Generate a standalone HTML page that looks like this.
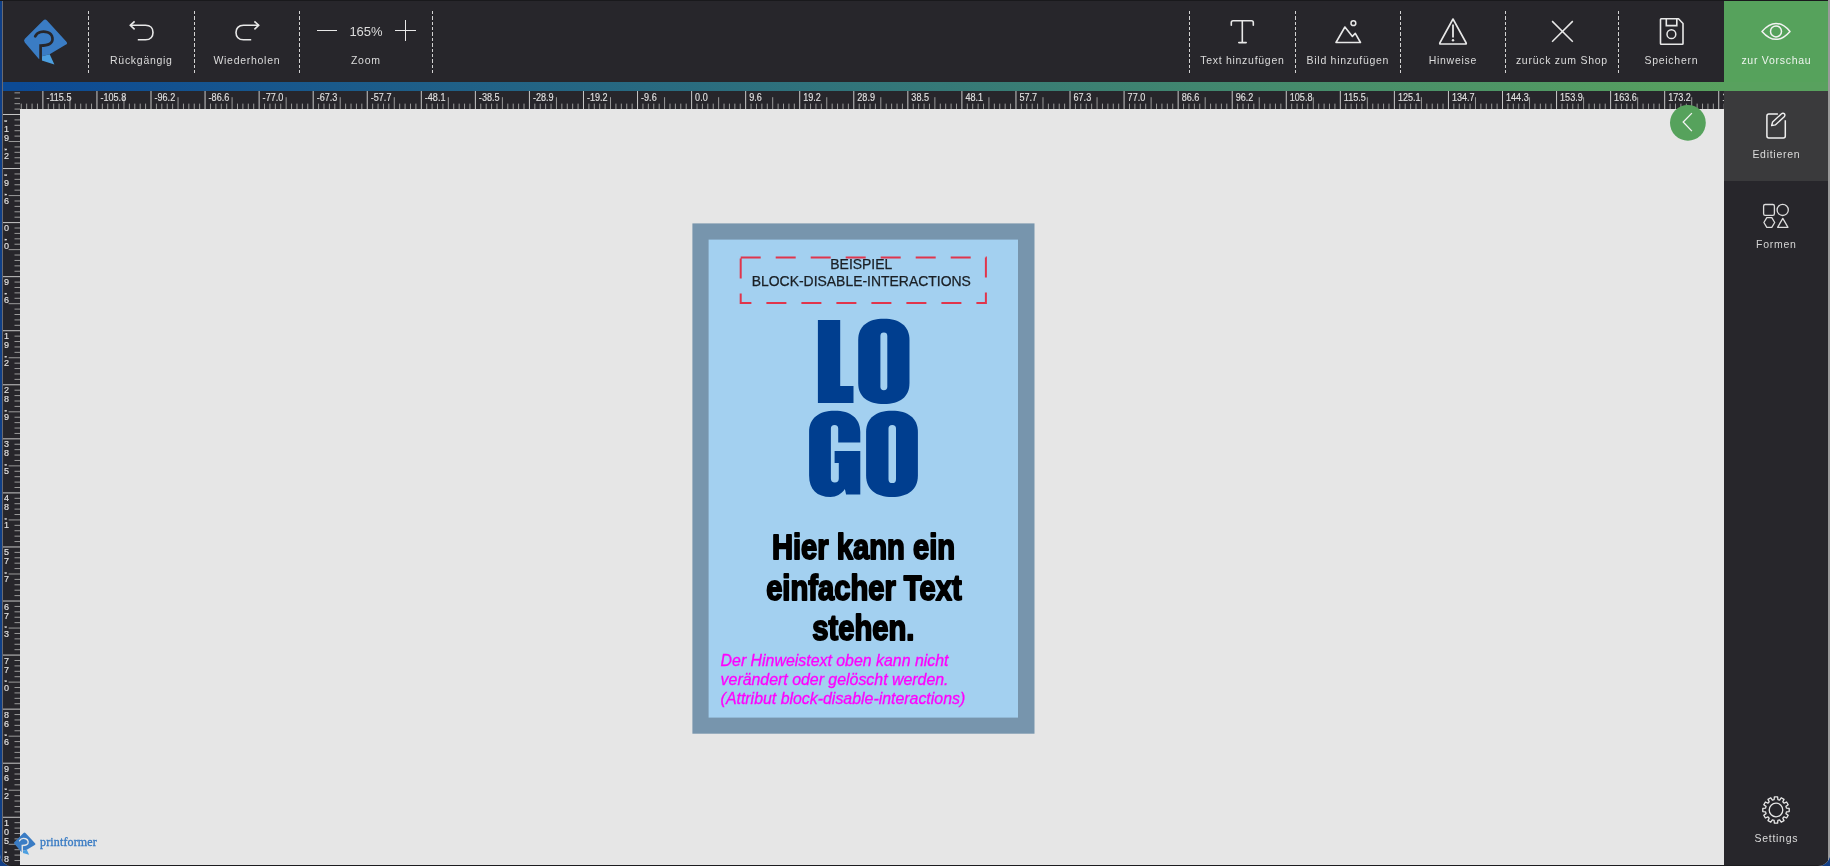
<!DOCTYPE html>
<html><head><meta charset="utf-8">
<style>
html,body{margin:0;padding:0;}
body{width:1830px;height:866px;position:relative;overflow:hidden;background:#123f86;font-family:"Liberation Sans",sans-serif;}
.app{will-change:transform;position:absolute;left:0;top:0;width:1830px;height:866px;overflow:hidden;border-radius:0 0 12px 12px;background:#e6e6e6;}
.tb{position:absolute;left:0;top:0;width:1830px;height:82px;background:#27262b;}
.sep{position:absolute;top:10.5px;width:1px;height:62.5px;background:repeating-linear-gradient(to bottom,#d2d2d2 0,#d2d2d2 3.4px,transparent 3.4px,transparent 5.36px);}
.lbl{position:absolute;top:51.6px;height:16px;font-size:10.5px;letter-spacing:0.72px;text-indent:0.72px;color:#dcdcdc;white-space:nowrap;text-align:center;line-height:16px;}
.ico{position:absolute;overflow:visible;}
.bar{position:absolute;left:0;top:82px;width:1830px;height:9px;background:linear-gradient(to right,#0c4a95 20px,#58a15e 1724px);}
.hr{position:absolute;left:2px;top:91px;width:1722px;height:18px;background:#27262b;}
.vr{position:absolute;left:2px;top:91px;width:18px;height:775px;background:#27262b;}
.side{position:absolute;left:1724px;top:91px;width:104px;height:775px;background:#27262b;}
.sideact{position:absolute;left:1724px;top:91px;width:104px;height:90px;background:#3a3a3c;}
.slbl{position:absolute;font-size:10.5px;letter-spacing:0.72px;text-indent:0.72px;color:#dcdcdc;white-space:nowrap;text-align:center;width:104px;left:1724px;line-height:14px;}
.green{position:absolute;left:1724px;top:1px;width:104px;height:90px;background:#56a25c;}
</style></head><body>
<div class="app">
  <div class="tb"></div>
  <div class="green"></div>
  <div class="bar"></div>

  <!-- logo -->
  <svg class="ico" style="left:0;top:0" width="80" height="80" viewBox="0 0 80 80">
    <path d="M43.2,20.6 Q45.1,18.6 47,20.6 L66.2,41.4 Q68.2,43.6 65.6,44.8 L49.7,54.3 L41.8,56.2 L41.8,59.5 L38.9,58.9 L24.8,42.4 Q23.2,40.5 24.9,38.8 Z" fill="#3a7cc4"/>
    <path d="M41.8,56.2 L49.7,54.3 L54.4,64.4 L41.8,60.5 Z" fill="#4c9fe0"/>
    <path d="M35.2,36.3 C37.5,31.6 43,30.8 47.5,32.2 C53.5,34.3 54,41.5 49.5,44 C47,45.5 44,45.6 40.6,45.6 L40.6,60" fill="none" stroke="#27262b" stroke-width="2.7" stroke-linecap="round"/>
  </svg>

  <div class="sep" style="left:88px"></div>
  <div class="sep" style="left:194px"></div>
  <div class="sep" style="left:299px"></div>
  <div class="sep" style="left:432px"></div>

  <div class="sep" style="left:1189px"></div>
  <div class="sep" style="left:1295px"></div>
  <div class="sep" style="left:1400px"></div>
  <div class="sep" style="left:1505px"></div>
  <div class="sep" style="left:1618px"></div>

  <!-- undo -->
  <svg class="ico" style="left:120px;top:10px" width="40" height="40" viewBox="0 0 40 40">
    <path d="M10.5,15.3 L25.5,15.3 C30.5,15.3 33,18.6 33,22.4 C33,26.4 30.5,29.8 25.5,29.8 L17.8,29.8" fill="none" stroke="#e8e8e8" stroke-width="1.6"/>
    <path d="M14.6,11.3 L10.3,15.3 L14.6,19.3" fill="none" stroke="#e8e8e8" stroke-width="1.6"/>
  </svg>
  <div class="lbl" style="left:88px;width:106px">Rückgängig</div>

  <!-- redo -->
  <svg class="ico" style="left:226px;top:10px" width="40" height="40" viewBox="0 0 40 40">
    <path d="M32.5,15.3 L17.5,15.3 C12.5,15.3 10,18.6 10,22.4 C10,26.4 12.5,29.8 17.5,29.8 L25.2,29.8" fill="none" stroke="#e8e8e8" stroke-width="1.6"/>
    <path d="M28.4,11.3 L32.7,15.3 L28.4,19.3" fill="none" stroke="#e8e8e8" stroke-width="1.6"/>
  </svg>
  <div class="lbl" style="left:194px;width:105px">Wiederholen</div>

  <!-- zoom -->
  <div style="position:absolute;left:317px;top:29.5px;width:20px;height:1.6px;background:#e8e8e8"></div>
  <div style="position:absolute;left:395px;top:29.7px;width:21px;height:1.6px;background:#e8e8e8"></div>
  <div style="position:absolute;left:404.7px;top:20px;width:1.6px;height:21px;background:#e8e8e8"></div>
  <div style="position:absolute;left:340px;top:22.7px;width:52px;text-align:center;font-size:13px;line-height:18px;color:#dcdcdc">165%</div>
  <div class="lbl" style="left:299px;width:133px">Zoom</div>

  <!-- text add -->
  <svg class="ico" style="left:1222px;top:10px" width="40" height="40" viewBox="0 0 40 40">
    <path d="M9.3,15.2 L9.3,12.6 Q9.3,10.8 11.1,10.8 L29.5,10.8 Q31.3,10.8 31.3,12.6 L31.3,15.2 M20.3,10.8 L20.3,32.6 M16.8,32.6 L24.2,32.6" fill="none" stroke="#e8e8e8" stroke-width="1.6" stroke-linecap="round"/>
  </svg>
  <div class="lbl" style="left:1189px;width:106px">Text hinzufügen</div>

  <!-- image add -->
  <svg class="ico" style="left:1328px;top:10px" width="40" height="40" viewBox="0 0 40 40">
    <path d="M8,32.5 L16.9,17 L24.4,26.4 L27.3,23.3 L32.5,32.5 Z" fill="none" stroke="#e8e8e8" stroke-width="1.6" stroke-linejoin="round"/>
    <circle cx="25.4" cy="13.2" r="2.4" fill="none" stroke="#e8e8e8" stroke-width="1.5"/>
  </svg>
  <div class="lbl" style="left:1295px;width:105px">Bild hinzufügen</div>

  <!-- warning -->
  <svg class="ico" style="left:1433px;top:10px" width="40" height="40" viewBox="0 0 40 40">
    <path d="M20,9 L33.2,33 Q33.6,34 32.6,34 L7.4,34 Q6.4,34 6.8,33 Z" fill="none" stroke="#e8e8e8" stroke-width="1.6" stroke-linejoin="round"/>
    <path d="M20,14.5 L20,27.5" stroke="#e8e8e8" stroke-width="1.8"/>
    <circle cx="20" cy="30.2" r="1.2" fill="#e8e8e8"/>
  </svg>
  <div class="lbl" style="left:1400px;width:105px">Hinweise</div>

  <!-- close -->
  <svg class="ico" style="left:1542px;top:11px" width="40" height="40" viewBox="0 0 40 40">
    <path d="M10.1,10.1 L30.8,30.8 M30.8,10.1 L10.1,30.8" fill="none" stroke="#e8e8e8" stroke-width="1.5"/>
  </svg>
  <div class="lbl" style="left:1505px;width:113px">zurück zum Shop</div>

  <!-- save -->
  <svg class="ico" style="left:1651px;top:10px" width="40" height="40" viewBox="0 0 40 40">
    <path d="M10.5,8.8 L27.5,8.8 L32,13.5 L32,33.5 Q32,34.2 31.3,34.2 L10.2,34.2 Q9.5,34.2 9.5,33.5 L9.5,9.5 Q9.5,8.8 10.2,8.8 Z" fill="none" stroke="#e8e8e8" stroke-width="1.6" stroke-linejoin="round"/>
    <path d="M15.3,9 L15.3,15.6 L25.8,15.6 L25.8,9" fill="none" stroke="#e8e8e8" stroke-width="1.6"/>
    <circle cx="20.4" cy="24.2" r="4.4" fill="none" stroke="#e8e8e8" stroke-width="1.5"/>
  </svg>
  <div class="lbl" style="left:1618px;width:106px">Speichern</div>

  <!-- preview -->
  <svg class="ico" style="left:1756px;top:12px" width="40" height="40" viewBox="0 0 40 40">
    <path d="M6,19.4 Q20,3.5 34,19.4 Q20,35.3 6,19.4 Z" fill="none" stroke="#f2f2f2" stroke-width="1.5" stroke-linejoin="round"/>
    <circle cx="20" cy="19.4" r="5.5" fill="none" stroke="#f2f2f2" stroke-width="1.5"/>
  </svg>
  <div class="lbl" style="left:1724px;width:104px;color:#eef5ee">zur Vorschau</div>

  <!-- rulers -->
  <div class="hr"></div>
  <div class="vr"></div>
  <svg style="position:absolute;left:20px;top:91px" width="1704" height="18" viewBox="0 0 1704 18"><rect x="0.76" y="12.6" width="1" height="5.4" fill="#9a9a9a"/><rect x="6.16" y="12.6" width="1" height="5.4" fill="#9a9a9a"/><rect x="11.57" y="12.6" width="1" height="5.4" fill="#9a9a9a"/><rect x="16.97" y="12.6" width="1" height="5.4" fill="#9a9a9a"/><rect x="22.38" y="0" width="1" height="18" fill="#c8c8c8"/><rect x="27.79" y="12.6" width="1" height="5.4" fill="#9a9a9a"/><rect x="33.19" y="12.6" width="1" height="5.4" fill="#9a9a9a"/><rect x="38.60" y="12.6" width="1" height="5.4" fill="#9a9a9a"/><rect x="44.00" y="12.6" width="1" height="5.4" fill="#9a9a9a"/><rect x="49.41" y="6.2" width="1" height="11.8" fill="#9a9a9a"/><rect x="54.82" y="12.6" width="1" height="5.4" fill="#9a9a9a"/><rect x="60.22" y="12.6" width="1" height="5.4" fill="#9a9a9a"/><rect x="65.63" y="12.6" width="1" height="5.4" fill="#9a9a9a"/><rect x="71.03" y="12.6" width="1" height="5.4" fill="#9a9a9a"/><rect x="76.44" y="0" width="1" height="18" fill="#c8c8c8"/><rect x="81.85" y="12.6" width="1" height="5.4" fill="#9a9a9a"/><rect x="87.25" y="12.6" width="1" height="5.4" fill="#9a9a9a"/><rect x="92.66" y="12.6" width="1" height="5.4" fill="#9a9a9a"/><rect x="98.06" y="12.6" width="1" height="5.4" fill="#9a9a9a"/><rect x="103.47" y="6.2" width="1" height="11.8" fill="#9a9a9a"/><rect x="108.88" y="12.6" width="1" height="5.4" fill="#9a9a9a"/><rect x="114.28" y="12.6" width="1" height="5.4" fill="#9a9a9a"/><rect x="119.69" y="12.6" width="1" height="5.4" fill="#9a9a9a"/><rect x="125.09" y="12.6" width="1" height="5.4" fill="#9a9a9a"/><rect x="130.50" y="0" width="1" height="18" fill="#c8c8c8"/><rect x="135.91" y="12.6" width="1" height="5.4" fill="#9a9a9a"/><rect x="141.31" y="12.6" width="1" height="5.4" fill="#9a9a9a"/><rect x="146.72" y="12.6" width="1" height="5.4" fill="#9a9a9a"/><rect x="152.12" y="12.6" width="1" height="5.4" fill="#9a9a9a"/><rect x="157.53" y="6.2" width="1" height="11.8" fill="#9a9a9a"/><rect x="162.94" y="12.6" width="1" height="5.4" fill="#9a9a9a"/><rect x="168.34" y="12.6" width="1" height="5.4" fill="#9a9a9a"/><rect x="173.75" y="12.6" width="1" height="5.4" fill="#9a9a9a"/><rect x="179.15" y="12.6" width="1" height="5.4" fill="#9a9a9a"/><rect x="184.56" y="0" width="1" height="18" fill="#c8c8c8"/><rect x="189.97" y="12.6" width="1" height="5.4" fill="#9a9a9a"/><rect x="195.37" y="12.6" width="1" height="5.4" fill="#9a9a9a"/><rect x="200.78" y="12.6" width="1" height="5.4" fill="#9a9a9a"/><rect x="206.18" y="12.6" width="1" height="5.4" fill="#9a9a9a"/><rect x="211.59" y="6.2" width="1" height="11.8" fill="#9a9a9a"/><rect x="217.00" y="12.6" width="1" height="5.4" fill="#9a9a9a"/><rect x="222.40" y="12.6" width="1" height="5.4" fill="#9a9a9a"/><rect x="227.81" y="12.6" width="1" height="5.4" fill="#9a9a9a"/><rect x="233.21" y="12.6" width="1" height="5.4" fill="#9a9a9a"/><rect x="238.62" y="0" width="1" height="18" fill="#c8c8c8"/><rect x="244.03" y="12.6" width="1" height="5.4" fill="#9a9a9a"/><rect x="249.43" y="12.6" width="1" height="5.4" fill="#9a9a9a"/><rect x="254.84" y="12.6" width="1" height="5.4" fill="#9a9a9a"/><rect x="260.24" y="12.6" width="1" height="5.4" fill="#9a9a9a"/><rect x="265.65" y="6.2" width="1" height="11.8" fill="#9a9a9a"/><rect x="271.06" y="12.6" width="1" height="5.4" fill="#9a9a9a"/><rect x="276.46" y="12.6" width="1" height="5.4" fill="#9a9a9a"/><rect x="281.87" y="12.6" width="1" height="5.4" fill="#9a9a9a"/><rect x="287.27" y="12.6" width="1" height="5.4" fill="#9a9a9a"/><rect x="292.68" y="0" width="1" height="18" fill="#c8c8c8"/><rect x="298.09" y="12.6" width="1" height="5.4" fill="#9a9a9a"/><rect x="303.49" y="12.6" width="1" height="5.4" fill="#9a9a9a"/><rect x="308.90" y="12.6" width="1" height="5.4" fill="#9a9a9a"/><rect x="314.30" y="12.6" width="1" height="5.4" fill="#9a9a9a"/><rect x="319.71" y="6.2" width="1" height="11.8" fill="#9a9a9a"/><rect x="325.12" y="12.6" width="1" height="5.4" fill="#9a9a9a"/><rect x="330.52" y="12.6" width="1" height="5.4" fill="#9a9a9a"/><rect x="335.93" y="12.6" width="1" height="5.4" fill="#9a9a9a"/><rect x="341.33" y="12.6" width="1" height="5.4" fill="#9a9a9a"/><rect x="346.74" y="0" width="1" height="18" fill="#c8c8c8"/><rect x="352.15" y="12.6" width="1" height="5.4" fill="#9a9a9a"/><rect x="357.55" y="12.6" width="1" height="5.4" fill="#9a9a9a"/><rect x="362.96" y="12.6" width="1" height="5.4" fill="#9a9a9a"/><rect x="368.36" y="12.6" width="1" height="5.4" fill="#9a9a9a"/><rect x="373.77" y="6.2" width="1" height="11.8" fill="#9a9a9a"/><rect x="379.18" y="12.6" width="1" height="5.4" fill="#9a9a9a"/><rect x="384.58" y="12.6" width="1" height="5.4" fill="#9a9a9a"/><rect x="389.99" y="12.6" width="1" height="5.4" fill="#9a9a9a"/><rect x="395.39" y="12.6" width="1" height="5.4" fill="#9a9a9a"/><rect x="400.80" y="0" width="1" height="18" fill="#c8c8c8"/><rect x="406.21" y="12.6" width="1" height="5.4" fill="#9a9a9a"/><rect x="411.61" y="12.6" width="1" height="5.4" fill="#9a9a9a"/><rect x="417.02" y="12.6" width="1" height="5.4" fill="#9a9a9a"/><rect x="422.42" y="12.6" width="1" height="5.4" fill="#9a9a9a"/><rect x="427.83" y="6.2" width="1" height="11.8" fill="#9a9a9a"/><rect x="433.24" y="12.6" width="1" height="5.4" fill="#9a9a9a"/><rect x="438.64" y="12.6" width="1" height="5.4" fill="#9a9a9a"/><rect x="444.05" y="12.6" width="1" height="5.4" fill="#9a9a9a"/><rect x="449.45" y="12.6" width="1" height="5.4" fill="#9a9a9a"/><rect x="454.86" y="0" width="1" height="18" fill="#c8c8c8"/><rect x="460.27" y="12.6" width="1" height="5.4" fill="#9a9a9a"/><rect x="465.67" y="12.6" width="1" height="5.4" fill="#9a9a9a"/><rect x="471.08" y="12.6" width="1" height="5.4" fill="#9a9a9a"/><rect x="476.48" y="12.6" width="1" height="5.4" fill="#9a9a9a"/><rect x="481.89" y="6.2" width="1" height="11.8" fill="#9a9a9a"/><rect x="487.30" y="12.6" width="1" height="5.4" fill="#9a9a9a"/><rect x="492.70" y="12.6" width="1" height="5.4" fill="#9a9a9a"/><rect x="498.11" y="12.6" width="1" height="5.4" fill="#9a9a9a"/><rect x="503.51" y="12.6" width="1" height="5.4" fill="#9a9a9a"/><rect x="508.92" y="0" width="1" height="18" fill="#c8c8c8"/><rect x="514.33" y="12.6" width="1" height="5.4" fill="#9a9a9a"/><rect x="519.73" y="12.6" width="1" height="5.4" fill="#9a9a9a"/><rect x="525.14" y="12.6" width="1" height="5.4" fill="#9a9a9a"/><rect x="530.54" y="12.6" width="1" height="5.4" fill="#9a9a9a"/><rect x="535.95" y="6.2" width="1" height="11.8" fill="#9a9a9a"/><rect x="541.36" y="12.6" width="1" height="5.4" fill="#9a9a9a"/><rect x="546.76" y="12.6" width="1" height="5.4" fill="#9a9a9a"/><rect x="552.17" y="12.6" width="1" height="5.4" fill="#9a9a9a"/><rect x="557.57" y="12.6" width="1" height="5.4" fill="#9a9a9a"/><rect x="562.98" y="0" width="1" height="18" fill="#c8c8c8"/><rect x="568.39" y="12.6" width="1" height="5.4" fill="#9a9a9a"/><rect x="573.79" y="12.6" width="1" height="5.4" fill="#9a9a9a"/><rect x="579.20" y="12.6" width="1" height="5.4" fill="#9a9a9a"/><rect x="584.60" y="12.6" width="1" height="5.4" fill="#9a9a9a"/><rect x="590.01" y="6.2" width="1" height="11.8" fill="#9a9a9a"/><rect x="595.42" y="12.6" width="1" height="5.4" fill="#9a9a9a"/><rect x="600.82" y="12.6" width="1" height="5.4" fill="#9a9a9a"/><rect x="606.23" y="12.6" width="1" height="5.4" fill="#9a9a9a"/><rect x="611.63" y="12.6" width="1" height="5.4" fill="#9a9a9a"/><rect x="617.04" y="0" width="1" height="18" fill="#c8c8c8"/><rect x="622.45" y="12.6" width="1" height="5.4" fill="#9a9a9a"/><rect x="627.85" y="12.6" width="1" height="5.4" fill="#9a9a9a"/><rect x="633.26" y="12.6" width="1" height="5.4" fill="#9a9a9a"/><rect x="638.66" y="12.6" width="1" height="5.4" fill="#9a9a9a"/><rect x="644.07" y="6.2" width="1" height="11.8" fill="#9a9a9a"/><rect x="649.48" y="12.6" width="1" height="5.4" fill="#9a9a9a"/><rect x="654.88" y="12.6" width="1" height="5.4" fill="#9a9a9a"/><rect x="660.29" y="12.6" width="1" height="5.4" fill="#9a9a9a"/><rect x="665.69" y="12.6" width="1" height="5.4" fill="#9a9a9a"/><rect x="671.10" y="0" width="1" height="18" fill="#c8c8c8"/><rect x="676.51" y="12.6" width="1" height="5.4" fill="#9a9a9a"/><rect x="681.91" y="12.6" width="1" height="5.4" fill="#9a9a9a"/><rect x="687.32" y="12.6" width="1" height="5.4" fill="#9a9a9a"/><rect x="692.72" y="12.6" width="1" height="5.4" fill="#9a9a9a"/><rect x="698.13" y="6.2" width="1" height="11.8" fill="#9a9a9a"/><rect x="703.54" y="12.6" width="1" height="5.4" fill="#9a9a9a"/><rect x="708.94" y="12.6" width="1" height="5.4" fill="#9a9a9a"/><rect x="714.35" y="12.6" width="1" height="5.4" fill="#9a9a9a"/><rect x="719.75" y="12.6" width="1" height="5.4" fill="#9a9a9a"/><rect x="725.16" y="0" width="1" height="18" fill="#c8c8c8"/><rect x="730.57" y="12.6" width="1" height="5.4" fill="#9a9a9a"/><rect x="735.97" y="12.6" width="1" height="5.4" fill="#9a9a9a"/><rect x="741.38" y="12.6" width="1" height="5.4" fill="#9a9a9a"/><rect x="746.78" y="12.6" width="1" height="5.4" fill="#9a9a9a"/><rect x="752.19" y="6.2" width="1" height="11.8" fill="#9a9a9a"/><rect x="757.60" y="12.6" width="1" height="5.4" fill="#9a9a9a"/><rect x="763.00" y="12.6" width="1" height="5.4" fill="#9a9a9a"/><rect x="768.41" y="12.6" width="1" height="5.4" fill="#9a9a9a"/><rect x="773.81" y="12.6" width="1" height="5.4" fill="#9a9a9a"/><rect x="779.22" y="0" width="1" height="18" fill="#c8c8c8"/><rect x="784.63" y="12.6" width="1" height="5.4" fill="#9a9a9a"/><rect x="790.03" y="12.6" width="1" height="5.4" fill="#9a9a9a"/><rect x="795.44" y="12.6" width="1" height="5.4" fill="#9a9a9a"/><rect x="800.84" y="12.6" width="1" height="5.4" fill="#9a9a9a"/><rect x="806.25" y="6.2" width="1" height="11.8" fill="#9a9a9a"/><rect x="811.66" y="12.6" width="1" height="5.4" fill="#9a9a9a"/><rect x="817.06" y="12.6" width="1" height="5.4" fill="#9a9a9a"/><rect x="822.47" y="12.6" width="1" height="5.4" fill="#9a9a9a"/><rect x="827.87" y="12.6" width="1" height="5.4" fill="#9a9a9a"/><rect x="833.28" y="0" width="1" height="18" fill="#c8c8c8"/><rect x="838.69" y="12.6" width="1" height="5.4" fill="#9a9a9a"/><rect x="844.09" y="12.6" width="1" height="5.4" fill="#9a9a9a"/><rect x="849.50" y="12.6" width="1" height="5.4" fill="#9a9a9a"/><rect x="854.90" y="12.6" width="1" height="5.4" fill="#9a9a9a"/><rect x="860.31" y="6.2" width="1" height="11.8" fill="#9a9a9a"/><rect x="865.72" y="12.6" width="1" height="5.4" fill="#9a9a9a"/><rect x="871.12" y="12.6" width="1" height="5.4" fill="#9a9a9a"/><rect x="876.53" y="12.6" width="1" height="5.4" fill="#9a9a9a"/><rect x="881.93" y="12.6" width="1" height="5.4" fill="#9a9a9a"/><rect x="887.34" y="0" width="1" height="18" fill="#c8c8c8"/><rect x="892.75" y="12.6" width="1" height="5.4" fill="#9a9a9a"/><rect x="898.15" y="12.6" width="1" height="5.4" fill="#9a9a9a"/><rect x="903.56" y="12.6" width="1" height="5.4" fill="#9a9a9a"/><rect x="908.96" y="12.6" width="1" height="5.4" fill="#9a9a9a"/><rect x="914.37" y="6.2" width="1" height="11.8" fill="#9a9a9a"/><rect x="919.78" y="12.6" width="1" height="5.4" fill="#9a9a9a"/><rect x="925.18" y="12.6" width="1" height="5.4" fill="#9a9a9a"/><rect x="930.59" y="12.6" width="1" height="5.4" fill="#9a9a9a"/><rect x="935.99" y="12.6" width="1" height="5.4" fill="#9a9a9a"/><rect x="941.40" y="0" width="1" height="18" fill="#c8c8c8"/><rect x="946.81" y="12.6" width="1" height="5.4" fill="#9a9a9a"/><rect x="952.21" y="12.6" width="1" height="5.4" fill="#9a9a9a"/><rect x="957.62" y="12.6" width="1" height="5.4" fill="#9a9a9a"/><rect x="963.02" y="12.6" width="1" height="5.4" fill="#9a9a9a"/><rect x="968.43" y="6.2" width="1" height="11.8" fill="#9a9a9a"/><rect x="973.84" y="12.6" width="1" height="5.4" fill="#9a9a9a"/><rect x="979.24" y="12.6" width="1" height="5.4" fill="#9a9a9a"/><rect x="984.65" y="12.6" width="1" height="5.4" fill="#9a9a9a"/><rect x="990.05" y="12.6" width="1" height="5.4" fill="#9a9a9a"/><rect x="995.46" y="0" width="1" height="18" fill="#c8c8c8"/><rect x="1000.87" y="12.6" width="1" height="5.4" fill="#9a9a9a"/><rect x="1006.27" y="12.6" width="1" height="5.4" fill="#9a9a9a"/><rect x="1011.68" y="12.6" width="1" height="5.4" fill="#9a9a9a"/><rect x="1017.08" y="12.6" width="1" height="5.4" fill="#9a9a9a"/><rect x="1022.49" y="6.2" width="1" height="11.8" fill="#9a9a9a"/><rect x="1027.90" y="12.6" width="1" height="5.4" fill="#9a9a9a"/><rect x="1033.30" y="12.6" width="1" height="5.4" fill="#9a9a9a"/><rect x="1038.71" y="12.6" width="1" height="5.4" fill="#9a9a9a"/><rect x="1044.11" y="12.6" width="1" height="5.4" fill="#9a9a9a"/><rect x="1049.52" y="0" width="1" height="18" fill="#c8c8c8"/><rect x="1054.93" y="12.6" width="1" height="5.4" fill="#9a9a9a"/><rect x="1060.33" y="12.6" width="1" height="5.4" fill="#9a9a9a"/><rect x="1065.74" y="12.6" width="1" height="5.4" fill="#9a9a9a"/><rect x="1071.14" y="12.6" width="1" height="5.4" fill="#9a9a9a"/><rect x="1076.55" y="6.2" width="1" height="11.8" fill="#9a9a9a"/><rect x="1081.96" y="12.6" width="1" height="5.4" fill="#9a9a9a"/><rect x="1087.36" y="12.6" width="1" height="5.4" fill="#9a9a9a"/><rect x="1092.77" y="12.6" width="1" height="5.4" fill="#9a9a9a"/><rect x="1098.17" y="12.6" width="1" height="5.4" fill="#9a9a9a"/><rect x="1103.58" y="0" width="1" height="18" fill="#c8c8c8"/><rect x="1108.99" y="12.6" width="1" height="5.4" fill="#9a9a9a"/><rect x="1114.39" y="12.6" width="1" height="5.4" fill="#9a9a9a"/><rect x="1119.80" y="12.6" width="1" height="5.4" fill="#9a9a9a"/><rect x="1125.20" y="12.6" width="1" height="5.4" fill="#9a9a9a"/><rect x="1130.61" y="6.2" width="1" height="11.8" fill="#9a9a9a"/><rect x="1136.02" y="12.6" width="1" height="5.4" fill="#9a9a9a"/><rect x="1141.42" y="12.6" width="1" height="5.4" fill="#9a9a9a"/><rect x="1146.83" y="12.6" width="1" height="5.4" fill="#9a9a9a"/><rect x="1152.23" y="12.6" width="1" height="5.4" fill="#9a9a9a"/><rect x="1157.64" y="0" width="1" height="18" fill="#c8c8c8"/><rect x="1163.05" y="12.6" width="1" height="5.4" fill="#9a9a9a"/><rect x="1168.45" y="12.6" width="1" height="5.4" fill="#9a9a9a"/><rect x="1173.86" y="12.6" width="1" height="5.4" fill="#9a9a9a"/><rect x="1179.26" y="12.6" width="1" height="5.4" fill="#9a9a9a"/><rect x="1184.67" y="6.2" width="1" height="11.8" fill="#9a9a9a"/><rect x="1190.08" y="12.6" width="1" height="5.4" fill="#9a9a9a"/><rect x="1195.48" y="12.6" width="1" height="5.4" fill="#9a9a9a"/><rect x="1200.89" y="12.6" width="1" height="5.4" fill="#9a9a9a"/><rect x="1206.29" y="12.6" width="1" height="5.4" fill="#9a9a9a"/><rect x="1211.70" y="0" width="1" height="18" fill="#c8c8c8"/><rect x="1217.11" y="12.6" width="1" height="5.4" fill="#9a9a9a"/><rect x="1222.51" y="12.6" width="1" height="5.4" fill="#9a9a9a"/><rect x="1227.92" y="12.6" width="1" height="5.4" fill="#9a9a9a"/><rect x="1233.32" y="12.6" width="1" height="5.4" fill="#9a9a9a"/><rect x="1238.73" y="6.2" width="1" height="11.8" fill="#9a9a9a"/><rect x="1244.14" y="12.6" width="1" height="5.4" fill="#9a9a9a"/><rect x="1249.54" y="12.6" width="1" height="5.4" fill="#9a9a9a"/><rect x="1254.95" y="12.6" width="1" height="5.4" fill="#9a9a9a"/><rect x="1260.35" y="12.6" width="1" height="5.4" fill="#9a9a9a"/><rect x="1265.76" y="0" width="1" height="18" fill="#c8c8c8"/><rect x="1271.17" y="12.6" width="1" height="5.4" fill="#9a9a9a"/><rect x="1276.57" y="12.6" width="1" height="5.4" fill="#9a9a9a"/><rect x="1281.98" y="12.6" width="1" height="5.4" fill="#9a9a9a"/><rect x="1287.38" y="12.6" width="1" height="5.4" fill="#9a9a9a"/><rect x="1292.79" y="6.2" width="1" height="11.8" fill="#9a9a9a"/><rect x="1298.20" y="12.6" width="1" height="5.4" fill="#9a9a9a"/><rect x="1303.60" y="12.6" width="1" height="5.4" fill="#9a9a9a"/><rect x="1309.01" y="12.6" width="1" height="5.4" fill="#9a9a9a"/><rect x="1314.41" y="12.6" width="1" height="5.4" fill="#9a9a9a"/><rect x="1319.82" y="0" width="1" height="18" fill="#c8c8c8"/><rect x="1325.23" y="12.6" width="1" height="5.4" fill="#9a9a9a"/><rect x="1330.63" y="12.6" width="1" height="5.4" fill="#9a9a9a"/><rect x="1336.04" y="12.6" width="1" height="5.4" fill="#9a9a9a"/><rect x="1341.44" y="12.6" width="1" height="5.4" fill="#9a9a9a"/><rect x="1346.85" y="6.2" width="1" height="11.8" fill="#9a9a9a"/><rect x="1352.26" y="12.6" width="1" height="5.4" fill="#9a9a9a"/><rect x="1357.66" y="12.6" width="1" height="5.4" fill="#9a9a9a"/><rect x="1363.07" y="12.6" width="1" height="5.4" fill="#9a9a9a"/><rect x="1368.47" y="12.6" width="1" height="5.4" fill="#9a9a9a"/><rect x="1373.88" y="0" width="1" height="18" fill="#c8c8c8"/><rect x="1379.29" y="12.6" width="1" height="5.4" fill="#9a9a9a"/><rect x="1384.69" y="12.6" width="1" height="5.4" fill="#9a9a9a"/><rect x="1390.10" y="12.6" width="1" height="5.4" fill="#9a9a9a"/><rect x="1395.50" y="12.6" width="1" height="5.4" fill="#9a9a9a"/><rect x="1400.91" y="6.2" width="1" height="11.8" fill="#9a9a9a"/><rect x="1406.32" y="12.6" width="1" height="5.4" fill="#9a9a9a"/><rect x="1411.72" y="12.6" width="1" height="5.4" fill="#9a9a9a"/><rect x="1417.13" y="12.6" width="1" height="5.4" fill="#9a9a9a"/><rect x="1422.53" y="12.6" width="1" height="5.4" fill="#9a9a9a"/><rect x="1427.94" y="0" width="1" height="18" fill="#c8c8c8"/><rect x="1433.35" y="12.6" width="1" height="5.4" fill="#9a9a9a"/><rect x="1438.75" y="12.6" width="1" height="5.4" fill="#9a9a9a"/><rect x="1444.16" y="12.6" width="1" height="5.4" fill="#9a9a9a"/><rect x="1449.56" y="12.6" width="1" height="5.4" fill="#9a9a9a"/><rect x="1454.97" y="6.2" width="1" height="11.8" fill="#9a9a9a"/><rect x="1460.38" y="12.6" width="1" height="5.4" fill="#9a9a9a"/><rect x="1465.78" y="12.6" width="1" height="5.4" fill="#9a9a9a"/><rect x="1471.19" y="12.6" width="1" height="5.4" fill="#9a9a9a"/><rect x="1476.59" y="12.6" width="1" height="5.4" fill="#9a9a9a"/><rect x="1482.00" y="0" width="1" height="18" fill="#c8c8c8"/><rect x="1487.41" y="12.6" width="1" height="5.4" fill="#9a9a9a"/><rect x="1492.81" y="12.6" width="1" height="5.4" fill="#9a9a9a"/><rect x="1498.22" y="12.6" width="1" height="5.4" fill="#9a9a9a"/><rect x="1503.62" y="12.6" width="1" height="5.4" fill="#9a9a9a"/><rect x="1509.03" y="6.2" width="1" height="11.8" fill="#9a9a9a"/><rect x="1514.44" y="12.6" width="1" height="5.4" fill="#9a9a9a"/><rect x="1519.84" y="12.6" width="1" height="5.4" fill="#9a9a9a"/><rect x="1525.25" y="12.6" width="1" height="5.4" fill="#9a9a9a"/><rect x="1530.65" y="12.6" width="1" height="5.4" fill="#9a9a9a"/><rect x="1536.06" y="0" width="1" height="18" fill="#c8c8c8"/><rect x="1541.47" y="12.6" width="1" height="5.4" fill="#9a9a9a"/><rect x="1546.87" y="12.6" width="1" height="5.4" fill="#9a9a9a"/><rect x="1552.28" y="12.6" width="1" height="5.4" fill="#9a9a9a"/><rect x="1557.68" y="12.6" width="1" height="5.4" fill="#9a9a9a"/><rect x="1563.09" y="6.2" width="1" height="11.8" fill="#9a9a9a"/><rect x="1568.50" y="12.6" width="1" height="5.4" fill="#9a9a9a"/><rect x="1573.90" y="12.6" width="1" height="5.4" fill="#9a9a9a"/><rect x="1579.31" y="12.6" width="1" height="5.4" fill="#9a9a9a"/><rect x="1584.71" y="12.6" width="1" height="5.4" fill="#9a9a9a"/><rect x="1590.12" y="0" width="1" height="18" fill="#c8c8c8"/><rect x="1595.53" y="12.6" width="1" height="5.4" fill="#9a9a9a"/><rect x="1600.93" y="12.6" width="1" height="5.4" fill="#9a9a9a"/><rect x="1606.34" y="12.6" width="1" height="5.4" fill="#9a9a9a"/><rect x="1611.74" y="12.6" width="1" height="5.4" fill="#9a9a9a"/><rect x="1617.15" y="6.2" width="1" height="11.8" fill="#9a9a9a"/><rect x="1622.56" y="12.6" width="1" height="5.4" fill="#9a9a9a"/><rect x="1627.96" y="12.6" width="1" height="5.4" fill="#9a9a9a"/><rect x="1633.37" y="12.6" width="1" height="5.4" fill="#9a9a9a"/><rect x="1638.77" y="12.6" width="1" height="5.4" fill="#9a9a9a"/><rect x="1644.18" y="0" width="1" height="18" fill="#c8c8c8"/><rect x="1649.59" y="12.6" width="1" height="5.4" fill="#9a9a9a"/><rect x="1654.99" y="12.6" width="1" height="5.4" fill="#9a9a9a"/><rect x="1660.40" y="12.6" width="1" height="5.4" fill="#9a9a9a"/><rect x="1665.80" y="12.6" width="1" height="5.4" fill="#9a9a9a"/><rect x="1671.21" y="6.2" width="1" height="11.8" fill="#9a9a9a"/><rect x="1676.62" y="12.6" width="1" height="5.4" fill="#9a9a9a"/><rect x="1682.02" y="12.6" width="1" height="5.4" fill="#9a9a9a"/><rect x="1687.43" y="12.6" width="1" height="5.4" fill="#9a9a9a"/><rect x="1692.83" y="12.6" width="1" height="5.4" fill="#9a9a9a"/><rect x="1698.24" y="0" width="1" height="18" fill="#c8c8c8"/><rect x="1703.65" y="12.6" width="1" height="5.4" fill="#9a9a9a"/><g fill="#e2e2e2" stroke="#e2e2e2" stroke-width="0.12" font-family="Liberation Sans" font-size="10.1"><text transform="translate(26.38,9.8) scale(0.9,1)" x="0" y="0">-115.5</text><text transform="translate(80.44,9.8) scale(0.9,1)" x="0" y="0">-105.8</text><text transform="translate(134.50,9.8) scale(0.9,1)" x="0" y="0">-96.2</text><text transform="translate(188.56,9.8) scale(0.9,1)" x="0" y="0">-86.6</text><text transform="translate(242.62,9.8) scale(0.9,1)" x="0" y="0">-77.0</text><text transform="translate(296.68,9.8) scale(0.9,1)" x="0" y="0">-67.3</text><text transform="translate(350.74,9.8) scale(0.9,1)" x="0" y="0">-57.7</text><text transform="translate(404.80,9.8) scale(0.9,1)" x="0" y="0">-48.1</text><text transform="translate(458.86,9.8) scale(0.9,1)" x="0" y="0">-38.5</text><text transform="translate(512.92,9.8) scale(0.9,1)" x="0" y="0">-28.9</text><text transform="translate(566.98,9.8) scale(0.9,1)" x="0" y="0">-19.2</text><text transform="translate(621.04,9.8) scale(0.9,1)" x="0" y="0">-9.6</text><text transform="translate(675.10,9.8) scale(0.9,1)" x="0" y="0">0.0</text><text transform="translate(729.16,9.8) scale(0.9,1)" x="0" y="0">9.6</text><text transform="translate(783.22,9.8) scale(0.9,1)" x="0" y="0">19.2</text><text transform="translate(837.28,9.8) scale(0.9,1)" x="0" y="0">28.9</text><text transform="translate(891.34,9.8) scale(0.9,1)" x="0" y="0">38.5</text><text transform="translate(945.40,9.8) scale(0.9,1)" x="0" y="0">48.1</text><text transform="translate(999.46,9.8) scale(0.9,1)" x="0" y="0">57.7</text><text transform="translate(1053.52,9.8) scale(0.9,1)" x="0" y="0">67.3</text><text transform="translate(1107.58,9.8) scale(0.9,1)" x="0" y="0">77.0</text><text transform="translate(1161.64,9.8) scale(0.9,1)" x="0" y="0">86.6</text><text transform="translate(1215.70,9.8) scale(0.9,1)" x="0" y="0">96.2</text><text transform="translate(1269.76,9.8) scale(0.9,1)" x="0" y="0">105.8</text><text transform="translate(1323.82,9.8) scale(0.9,1)" x="0" y="0">115.5</text><text transform="translate(1377.88,9.8) scale(0.9,1)" x="0" y="0">125.1</text><text transform="translate(1431.94,9.8) scale(0.9,1)" x="0" y="0">134.7</text><text transform="translate(1486.00,9.8) scale(0.9,1)" x="0" y="0">144.3</text><text transform="translate(1540.06,9.8) scale(0.9,1)" x="0" y="0">153.9</text><text transform="translate(1594.12,9.8) scale(0.9,1)" x="0" y="0">163.6</text><text transform="translate(1648.18,9.8) scale(0.9,1)" x="0" y="0">173.2</text><text transform="translate(1702.24,9.8) scale(0.9,1)" x="0" y="0">182.8</text></g></svg>
  <svg style="position:absolute;left:2px;top:91px" width="18" height="775" viewBox="0 0 18 775"><rect x="12.5" y="1.36" width="5.5" height="1" fill="#9a9a9a"/><rect x="12.5" y="6.76" width="5.5" height="1" fill="#9a9a9a"/><rect x="12.5" y="12.17" width="5.5" height="1" fill="#9a9a9a"/><rect x="12.5" y="17.57" width="5.5" height="1" fill="#9a9a9a"/><rect x="0" y="22.98" width="18" height="1" fill="#c8c8c8"/><rect x="12.5" y="28.39" width="5.5" height="1" fill="#9a9a9a"/><rect x="12.5" y="33.79" width="5.5" height="1" fill="#9a9a9a"/><rect x="12.5" y="39.20" width="5.5" height="1" fill="#9a9a9a"/><rect x="12.5" y="44.60" width="5.5" height="1" fill="#9a9a9a"/><rect x="6.6" y="50.01" width="11.4" height="1" fill="#9a9a9a"/><rect x="12.5" y="55.42" width="5.5" height="1" fill="#9a9a9a"/><rect x="12.5" y="60.82" width="5.5" height="1" fill="#9a9a9a"/><rect x="12.5" y="66.23" width="5.5" height="1" fill="#9a9a9a"/><rect x="12.5" y="71.63" width="5.5" height="1" fill="#9a9a9a"/><rect x="0" y="77.04" width="18" height="1" fill="#c8c8c8"/><rect x="12.5" y="82.45" width="5.5" height="1" fill="#9a9a9a"/><rect x="12.5" y="87.85" width="5.5" height="1" fill="#9a9a9a"/><rect x="12.5" y="93.26" width="5.5" height="1" fill="#9a9a9a"/><rect x="12.5" y="98.66" width="5.5" height="1" fill="#9a9a9a"/><rect x="6.6" y="104.07" width="11.4" height="1" fill="#9a9a9a"/><rect x="12.5" y="109.48" width="5.5" height="1" fill="#9a9a9a"/><rect x="12.5" y="114.88" width="5.5" height="1" fill="#9a9a9a"/><rect x="12.5" y="120.29" width="5.5" height="1" fill="#9a9a9a"/><rect x="12.5" y="125.69" width="5.5" height="1" fill="#9a9a9a"/><rect x="0" y="131.10" width="18" height="1" fill="#c8c8c8"/><rect x="12.5" y="136.51" width="5.5" height="1" fill="#9a9a9a"/><rect x="12.5" y="141.91" width="5.5" height="1" fill="#9a9a9a"/><rect x="12.5" y="147.32" width="5.5" height="1" fill="#9a9a9a"/><rect x="12.5" y="152.72" width="5.5" height="1" fill="#9a9a9a"/><rect x="6.6" y="158.13" width="11.4" height="1" fill="#9a9a9a"/><rect x="12.5" y="163.54" width="5.5" height="1" fill="#9a9a9a"/><rect x="12.5" y="168.94" width="5.5" height="1" fill="#9a9a9a"/><rect x="12.5" y="174.35" width="5.5" height="1" fill="#9a9a9a"/><rect x="12.5" y="179.75" width="5.5" height="1" fill="#9a9a9a"/><rect x="0" y="185.16" width="18" height="1" fill="#c8c8c8"/><rect x="12.5" y="190.57" width="5.5" height="1" fill="#9a9a9a"/><rect x="12.5" y="195.97" width="5.5" height="1" fill="#9a9a9a"/><rect x="12.5" y="201.38" width="5.5" height="1" fill="#9a9a9a"/><rect x="12.5" y="206.78" width="5.5" height="1" fill="#9a9a9a"/><rect x="6.6" y="212.19" width="11.4" height="1" fill="#9a9a9a"/><rect x="12.5" y="217.60" width="5.5" height="1" fill="#9a9a9a"/><rect x="12.5" y="223.00" width="5.5" height="1" fill="#9a9a9a"/><rect x="12.5" y="228.41" width="5.5" height="1" fill="#9a9a9a"/><rect x="12.5" y="233.81" width="5.5" height="1" fill="#9a9a9a"/><rect x="0" y="239.22" width="18" height="1" fill="#c8c8c8"/><rect x="12.5" y="244.63" width="5.5" height="1" fill="#9a9a9a"/><rect x="12.5" y="250.03" width="5.5" height="1" fill="#9a9a9a"/><rect x="12.5" y="255.44" width="5.5" height="1" fill="#9a9a9a"/><rect x="12.5" y="260.84" width="5.5" height="1" fill="#9a9a9a"/><rect x="6.6" y="266.25" width="11.4" height="1" fill="#9a9a9a"/><rect x="12.5" y="271.66" width="5.5" height="1" fill="#9a9a9a"/><rect x="12.5" y="277.06" width="5.5" height="1" fill="#9a9a9a"/><rect x="12.5" y="282.47" width="5.5" height="1" fill="#9a9a9a"/><rect x="12.5" y="287.87" width="5.5" height="1" fill="#9a9a9a"/><rect x="0" y="293.28" width="18" height="1" fill="#c8c8c8"/><rect x="12.5" y="298.69" width="5.5" height="1" fill="#9a9a9a"/><rect x="12.5" y="304.09" width="5.5" height="1" fill="#9a9a9a"/><rect x="12.5" y="309.50" width="5.5" height="1" fill="#9a9a9a"/><rect x="12.5" y="314.90" width="5.5" height="1" fill="#9a9a9a"/><rect x="6.6" y="320.31" width="11.4" height="1" fill="#9a9a9a"/><rect x="12.5" y="325.72" width="5.5" height="1" fill="#9a9a9a"/><rect x="12.5" y="331.12" width="5.5" height="1" fill="#9a9a9a"/><rect x="12.5" y="336.53" width="5.5" height="1" fill="#9a9a9a"/><rect x="12.5" y="341.93" width="5.5" height="1" fill="#9a9a9a"/><rect x="0" y="347.34" width="18" height="1" fill="#c8c8c8"/><rect x="12.5" y="352.75" width="5.5" height="1" fill="#9a9a9a"/><rect x="12.5" y="358.15" width="5.5" height="1" fill="#9a9a9a"/><rect x="12.5" y="363.56" width="5.5" height="1" fill="#9a9a9a"/><rect x="12.5" y="368.96" width="5.5" height="1" fill="#9a9a9a"/><rect x="6.6" y="374.37" width="11.4" height="1" fill="#9a9a9a"/><rect x="12.5" y="379.78" width="5.5" height="1" fill="#9a9a9a"/><rect x="12.5" y="385.18" width="5.5" height="1" fill="#9a9a9a"/><rect x="12.5" y="390.59" width="5.5" height="1" fill="#9a9a9a"/><rect x="12.5" y="395.99" width="5.5" height="1" fill="#9a9a9a"/><rect x="0" y="401.40" width="18" height="1" fill="#c8c8c8"/><rect x="12.5" y="406.81" width="5.5" height="1" fill="#9a9a9a"/><rect x="12.5" y="412.21" width="5.5" height="1" fill="#9a9a9a"/><rect x="12.5" y="417.62" width="5.5" height="1" fill="#9a9a9a"/><rect x="12.5" y="423.02" width="5.5" height="1" fill="#9a9a9a"/><rect x="6.6" y="428.43" width="11.4" height="1" fill="#9a9a9a"/><rect x="12.5" y="433.84" width="5.5" height="1" fill="#9a9a9a"/><rect x="12.5" y="439.24" width="5.5" height="1" fill="#9a9a9a"/><rect x="12.5" y="444.65" width="5.5" height="1" fill="#9a9a9a"/><rect x="12.5" y="450.05" width="5.5" height="1" fill="#9a9a9a"/><rect x="0" y="455.46" width="18" height="1" fill="#c8c8c8"/><rect x="12.5" y="460.87" width="5.5" height="1" fill="#9a9a9a"/><rect x="12.5" y="466.27" width="5.5" height="1" fill="#9a9a9a"/><rect x="12.5" y="471.68" width="5.5" height="1" fill="#9a9a9a"/><rect x="12.5" y="477.08" width="5.5" height="1" fill="#9a9a9a"/><rect x="6.6" y="482.49" width="11.4" height="1" fill="#9a9a9a"/><rect x="12.5" y="487.90" width="5.5" height="1" fill="#9a9a9a"/><rect x="12.5" y="493.30" width="5.5" height="1" fill="#9a9a9a"/><rect x="12.5" y="498.71" width="5.5" height="1" fill="#9a9a9a"/><rect x="12.5" y="504.11" width="5.5" height="1" fill="#9a9a9a"/><rect x="0" y="509.52" width="18" height="1" fill="#c8c8c8"/><rect x="12.5" y="514.93" width="5.5" height="1" fill="#9a9a9a"/><rect x="12.5" y="520.33" width="5.5" height="1" fill="#9a9a9a"/><rect x="12.5" y="525.74" width="5.5" height="1" fill="#9a9a9a"/><rect x="12.5" y="531.14" width="5.5" height="1" fill="#9a9a9a"/><rect x="6.6" y="536.55" width="11.4" height="1" fill="#9a9a9a"/><rect x="12.5" y="541.96" width="5.5" height="1" fill="#9a9a9a"/><rect x="12.5" y="547.36" width="5.5" height="1" fill="#9a9a9a"/><rect x="12.5" y="552.77" width="5.5" height="1" fill="#9a9a9a"/><rect x="12.5" y="558.17" width="5.5" height="1" fill="#9a9a9a"/><rect x="0" y="563.58" width="18" height="1" fill="#c8c8c8"/><rect x="12.5" y="568.99" width="5.5" height="1" fill="#9a9a9a"/><rect x="12.5" y="574.39" width="5.5" height="1" fill="#9a9a9a"/><rect x="12.5" y="579.80" width="5.5" height="1" fill="#9a9a9a"/><rect x="12.5" y="585.20" width="5.5" height="1" fill="#9a9a9a"/><rect x="6.6" y="590.61" width="11.4" height="1" fill="#9a9a9a"/><rect x="12.5" y="596.02" width="5.5" height="1" fill="#9a9a9a"/><rect x="12.5" y="601.42" width="5.5" height="1" fill="#9a9a9a"/><rect x="12.5" y="606.83" width="5.5" height="1" fill="#9a9a9a"/><rect x="12.5" y="612.23" width="5.5" height="1" fill="#9a9a9a"/><rect x="0" y="617.64" width="18" height="1" fill="#c8c8c8"/><rect x="12.5" y="623.05" width="5.5" height="1" fill="#9a9a9a"/><rect x="12.5" y="628.45" width="5.5" height="1" fill="#9a9a9a"/><rect x="12.5" y="633.86" width="5.5" height="1" fill="#9a9a9a"/><rect x="12.5" y="639.26" width="5.5" height="1" fill="#9a9a9a"/><rect x="6.6" y="644.67" width="11.4" height="1" fill="#9a9a9a"/><rect x="12.5" y="650.08" width="5.5" height="1" fill="#9a9a9a"/><rect x="12.5" y="655.48" width="5.5" height="1" fill="#9a9a9a"/><rect x="12.5" y="660.89" width="5.5" height="1" fill="#9a9a9a"/><rect x="12.5" y="666.29" width="5.5" height="1" fill="#9a9a9a"/><rect x="0" y="671.70" width="18" height="1" fill="#c8c8c8"/><rect x="12.5" y="677.11" width="5.5" height="1" fill="#9a9a9a"/><rect x="12.5" y="682.51" width="5.5" height="1" fill="#9a9a9a"/><rect x="12.5" y="687.92" width="5.5" height="1" fill="#9a9a9a"/><rect x="12.5" y="693.32" width="5.5" height="1" fill="#9a9a9a"/><rect x="6.6" y="698.73" width="11.4" height="1" fill="#9a9a9a"/><rect x="12.5" y="704.14" width="5.5" height="1" fill="#9a9a9a"/><rect x="12.5" y="709.54" width="5.5" height="1" fill="#9a9a9a"/><rect x="12.5" y="714.95" width="5.5" height="1" fill="#9a9a9a"/><rect x="12.5" y="720.35" width="5.5" height="1" fill="#9a9a9a"/><rect x="0" y="725.76" width="18" height="1" fill="#c8c8c8"/><rect x="12.5" y="731.17" width="5.5" height="1" fill="#9a9a9a"/><rect x="12.5" y="736.57" width="5.5" height="1" fill="#9a9a9a"/><rect x="12.5" y="741.98" width="5.5" height="1" fill="#9a9a9a"/><rect x="12.5" y="747.38" width="5.5" height="1" fill="#9a9a9a"/><rect x="6.6" y="752.79" width="11.4" height="1" fill="#9a9a9a"/><rect x="12.5" y="758.20" width="5.5" height="1" fill="#9a9a9a"/><rect x="12.5" y="763.60" width="5.5" height="1" fill="#9a9a9a"/><rect x="12.5" y="769.01" width="5.5" height="1" fill="#9a9a9a"/><rect x="12.5" y="774.41" width="5.5" height="1" fill="#9a9a9a"/><g fill="#e2e2e2" stroke="#e2e2e2" stroke-width="0.15" font-family="Liberation Sans" font-size="9"><rect x="2.4" y="29.48" width="2.6" height="1.2"/><text x="4.6" y="40.98" text-anchor="middle">1</text><text x="4.6" y="49.98" text-anchor="middle">9</text><rect x="2.8" y="57.88" width="2" height="1.3"/><text x="4.6" y="67.98" text-anchor="middle">2</text><rect x="2.4" y="83.54" width="2.6" height="1.2"/><text x="4.6" y="95.04" text-anchor="middle">9</text><rect x="2.8" y="102.94" width="2" height="1.3"/><text x="4.6" y="113.04" text-anchor="middle">6</text><text x="4.6" y="140.10" text-anchor="middle">0</text><rect x="2.8" y="148.00" width="2" height="1.3"/><text x="4.6" y="158.10" text-anchor="middle">0</text><text x="4.6" y="194.16" text-anchor="middle">9</text><rect x="2.8" y="202.06" width="2" height="1.3"/><text x="4.6" y="212.16" text-anchor="middle">6</text><text x="4.6" y="248.22" text-anchor="middle">1</text><text x="4.6" y="257.22" text-anchor="middle">9</text><rect x="2.8" y="265.12" width="2" height="1.3"/><text x="4.6" y="275.22" text-anchor="middle">2</text><text x="4.6" y="302.28" text-anchor="middle">2</text><text x="4.6" y="311.28" text-anchor="middle">8</text><rect x="2.8" y="319.18" width="2" height="1.3"/><text x="4.6" y="329.28" text-anchor="middle">9</text><text x="4.6" y="356.34" text-anchor="middle">3</text><text x="4.6" y="365.34" text-anchor="middle">8</text><rect x="2.8" y="373.24" width="2" height="1.3"/><text x="4.6" y="383.34" text-anchor="middle">5</text><text x="4.6" y="410.40" text-anchor="middle">4</text><text x="4.6" y="419.40" text-anchor="middle">8</text><rect x="2.8" y="427.30" width="2" height="1.3"/><text x="4.6" y="437.40" text-anchor="middle">1</text><text x="4.6" y="464.46" text-anchor="middle">5</text><text x="4.6" y="473.46" text-anchor="middle">7</text><rect x="2.8" y="481.36" width="2" height="1.3"/><text x="4.6" y="491.46" text-anchor="middle">7</text><text x="4.6" y="518.52" text-anchor="middle">6</text><text x="4.6" y="527.52" text-anchor="middle">7</text><rect x="2.8" y="535.42" width="2" height="1.3"/><text x="4.6" y="545.52" text-anchor="middle">3</text><text x="4.6" y="572.58" text-anchor="middle">7</text><text x="4.6" y="581.58" text-anchor="middle">7</text><rect x="2.8" y="589.48" width="2" height="1.3"/><text x="4.6" y="599.58" text-anchor="middle">0</text><text x="4.6" y="626.64" text-anchor="middle">8</text><text x="4.6" y="635.64" text-anchor="middle">6</text><rect x="2.8" y="643.54" width="2" height="1.3"/><text x="4.6" y="653.64" text-anchor="middle">6</text><text x="4.6" y="680.70" text-anchor="middle">9</text><text x="4.6" y="689.70" text-anchor="middle">6</text><rect x="2.8" y="697.60" width="2" height="1.3"/><text x="4.6" y="707.70" text-anchor="middle">2</text><text x="4.6" y="734.76" text-anchor="middle">1</text><text x="4.6" y="743.76" text-anchor="middle">0</text><text x="4.6" y="752.76" text-anchor="middle">5</text><rect x="2.8" y="760.66" width="2" height="1.3"/><text x="4.6" y="770.76" text-anchor="middle">8</text><text x="4.6" y="788.82" text-anchor="middle">1</text><text x="4.6" y="797.82" text-anchor="middle">1</text><text x="4.6" y="806.82" text-anchor="middle">5</text><rect x="2.8" y="814.72" width="2" height="1.3"/><text x="4.6" y="824.82" text-anchor="middle">5</text></g></svg>

  <!-- sidebar -->
  <div class="side"></div>
  <div class="sideact"></div>


  <!-- document -->
  <svg class="ico" style="left:0;top:0" width="1830" height="866" viewBox="0 0 1830 866">
    <rect x="692.4" y="223.4" width="342.1" height="510.3" fill="#7795ad"/>
    <rect x="708.6" y="239.6" width="309.4" height="478" fill="#a3d0f0"/>
  </svg>
  <!-- sidebar items -->
  <svg class="ico" style="left:1756px;top:106px" width="40" height="40" viewBox="1756 106 40 40">
    <path d="M1777.9,114 L1768.9,114 Q1766.9,114 1766.9,116 L1766.9,136.1 Q1766.9,138.1 1768.9,138.1 L1783.3,138.1 Q1785.3,138.1 1785.3,136.1 L1785.3,120.2" fill="none" stroke="#f0f0f0" stroke-width="1.5"/>
    <path d="M1771.6,125.6 L1772.6,121.96 L1781.54,113.73 A2 2 0 0 1 1784.26,116.67 L1775.31,124.9 Z" fill="none" stroke="#f0f0f0" stroke-width="1.4" stroke-linejoin="round"/>
  </svg>
  <div class="slbl" style="top:146.7px">Editieren</div>
  <svg class="ico" style="left:1756px;top:196px" width="40" height="40" viewBox="1756 196 40 40">
    <rect x="1763.6" y="204.5" width="10.8" height="10.8" rx="1.6" fill="none" stroke="#dcdcdc" stroke-width="1.3"/>
    <circle cx="1782.7" cy="209.9" r="5.6" fill="none" stroke="#dcdcdc" stroke-width="1.3"/>
    <path d="M1763.9,222.5 L1766.8,217.7 L1771.8,217.7 L1774.7,222.5 L1771.8,227.4 L1766.8,227.4 Z" fill="none" stroke="#dcdcdc" stroke-width="1.3" stroke-linejoin="round"/>
    <path d="M1782.8,218.4 L1788,227.3 L1777.6,227.3 Z" fill="none" stroke="#dcdcdc" stroke-width="1.3" stroke-linejoin="round"/>
  </svg>
  <div class="slbl" style="top:236.7px;color:#d4d4d4">Formen</div>
  <svg class="ico" style="left:1756px;top:790px" width="40" height="40" viewBox="-20 -20 40 40">
    <path d="M-1.84,-10.44 L-1.62,-13.20 L1.62,-13.20 L1.84,-10.44 L3.63,-9.96 L5.20,-12.24 L8.00,-10.62 L6.81,-8.12 L8.12,-6.81 L10.62,-8.00 L12.24,-5.20 L9.96,-3.63 L10.44,-1.84 L13.20,-1.62 L13.20,1.62 L10.44,1.84 L9.96,3.63 L12.24,5.20 L10.62,8.00 L8.12,6.81 L6.81,8.12 L8.00,10.62 L5.20,12.24 L3.63,9.96 L1.84,10.44 L1.62,13.20 L-1.62,13.20 L-1.84,10.44 L-3.63,9.96 L-5.20,12.24 L-8.00,10.62 L-6.81,8.12 L-8.12,6.81 L-10.62,8.00 L-12.24,5.20 L-9.96,3.63 L-10.44,1.84 L-13.20,1.62 L-13.20,-1.62 L-10.44,-1.84 L-9.96,-3.63 L-12.24,-5.20 L-10.62,-8.00 L-8.12,-6.81 L-6.81,-8.12 L-8.00,-10.62 L-5.20,-12.24 L-3.63,-9.96 Z" fill="none" stroke="#e6e6e6" stroke-width="1.3" stroke-linejoin="round"/>
    <circle cx="0" cy="0" r="6.8" fill="none" stroke="#e6e6e6" stroke-width="1.3"/>
  </svg>
  <div class="slbl" style="top:830.7px">Settings</div>

  <!-- green toggle -->
  <svg class="ico" style="left:1668px;top:103px" width="40" height="40" viewBox="1668 103 40 40">
    <circle cx="1687.9" cy="122.8" r="17.9" fill="#56a25c"/>
    <path d="M1691.9,113.1 L1683.2,122 L1691.9,131.1" fill="none" stroke="#f4f4f4" stroke-width="1.3"/>
  </svg>

  <!-- bottom logo -->
  <svg class="ico" style="left:0;top:820px" width="110" height="46" viewBox="0 820 110 46">
    <g transform="translate(1.95,822.65) scale(0.5)">
      <path d="M43.2,20.6 Q45.1,18.6 47,20.6 L66.2,41.4 Q68.2,43.6 65.6,44.8 L49.7,54.3 L41.8,56.2 L41.8,59.5 L38.9,58.9 L24.8,42.4 Q23.2,40.5 24.9,38.8 Z" fill="#3a7cc4"/>
      <path d="M41.8,56.2 L49.7,54.3 L54.4,64.4 L41.8,60.5 Z" fill="#4c9fe0"/>
      <path d="M35.2,36.3 C37.5,31.6 43,30.8 47.5,32.2 C53.5,34.3 54,41.5 49.5,44 C47,45.5 44,45.6 40.6,45.6 L40.6,60" fill="none" stroke="#e6e6e6" stroke-width="2.7" stroke-linecap="round"/>
    </g>
    <text x="40" y="845.8" font-family="Liberation Serif" font-size="12" fill="#3a7cc4" stroke="#3a7cc4" stroke-width="0.35" letter-spacing="0.15">printformer</text>
  </svg>

  <!-- document content -->
  <svg class="ico" style="left:692px;top:223px" width="343" height="511" viewBox="692 223 343 511">
    <rect x="740.7" y="257.6" width="245.2" height="45.3" fill="none" stroke="#e0354c" stroke-width="2" stroke-dasharray="20 15"/>
    <text x="861.3" y="268.9" text-anchor="middle" font-family="Liberation Sans" font-size="13.95" fill="#1a1f24" stroke="#1a1f24" stroke-width="0.25">BEISPIEL</text>
    <text x="861.3" y="286.4" text-anchor="middle" font-family="Liberation Sans" font-size="13.95" fill="#1a1f24" stroke="#1a1f24" stroke-width="0.25">BLOCK-DISABLE-INTERACTIONS</text>
    <g fill="#003e8f">
      <path d="M817.9,319.9 L840.2,319.9 L840.2,386 L853.5,386 L853.5,403 L817.9,403 Z"/>
      <path d="M858.2,340 C858.2,326 868,318.7 883.85,318.7 C899.7,318.7 909.5,326 909.5,340 L909.5,383 C909.5,397 899.7,404.1 883.85,404.1 C868,404.1 858.2,397 858.2,383 Z"/>
      <path d="M809.1,432 C809.1,418 819,410.7 834.7,410.7 C850.5,410.7 860.3,418 860.3,432 L860.3,494.6 L846.1,494.6 L844.9,489.1 C841,494.5 836.5,497 830.5,497 C817,497 809.1,489.5 809.1,475.5 Z"/>
      <path d="M866.1,432 C866.1,418 876,410.7 892,410.7 C908,410.7 917.9,418 917.9,432 L917.9,475.5 C917.9,489.5 908,497 892,497 C876,497 866.1,489.5 866.1,475.5 Z"/>
    </g>
    <g fill="#a3d0f0">
      <path d="M880.4,336 A3.45 3.5 0 0 1 887.3,336 L887.3,386.8 A3.45 3.5 0 0 1 880.4,386.8 Z"/>
      <path d="M830.9,428.6 A3.65 3.7 0 0 1 838.2,428.6 L838.2,442.4 L861,442.4 L861,450.9 L834.6,450.9 L834.6,463 L838.8,463 L838.8,478.6 A3.95 3.9 0 0 1 830.9,478.6 Z"/>
      <path d="M888.5,428.6 A3.75 3.7 0 0 1 896,428.6 L896,479.2 A3.75 3.9 0 0 1 888.5,479.2 Z"/>
    </g>
    <g font-family="Liberation Sans" font-weight="bold" font-size="36" fill="#000" stroke="#000" stroke-width="2" stroke-linejoin="round" text-anchor="middle">
      <text transform="translate(863.5,559) scale(0.81,1)">Hier kann ein</text>
      <text transform="translate(863.9,600.2) scale(0.81,1)">einfacher Text</text>
      <text transform="translate(863.3,640.3) scale(0.81,1)">stehen.</text>
    </g>
    <g font-family="Liberation Sans" font-style="italic" font-size="15.9" fill="#ff00ff" stroke="#ff00ff" stroke-width="0.3">
      <text x="720.6" y="666.1">Der Hinweistext oben kann nicht</text>
      <text x="720.6" y="685.2">verändert oder gelöscht werden.</text>
      <text x="720.6" y="703.8">(Attribut block-disable-interactions)</text>
    </g>
  </svg>


  <div style="position:absolute;left:0;top:0;width:2px;height:866px;background:#0f3f86"></div>
  <div style="position:absolute;left:2px;top:0;width:1px;height:866px;background:#6a6a70"></div>
  <div style="position:absolute;left:0;top:0;width:1830px;height:1px;background:#19191c"></div>
  <div style="position:absolute;left:1828px;top:0;width:2px;height:866px;background:#9a9a9a"></div>
  <div style="position:absolute;left:0;top:864.5px;width:1830px;height:2px;background:#1c1c1f"></div>
</div>
</body></html>
